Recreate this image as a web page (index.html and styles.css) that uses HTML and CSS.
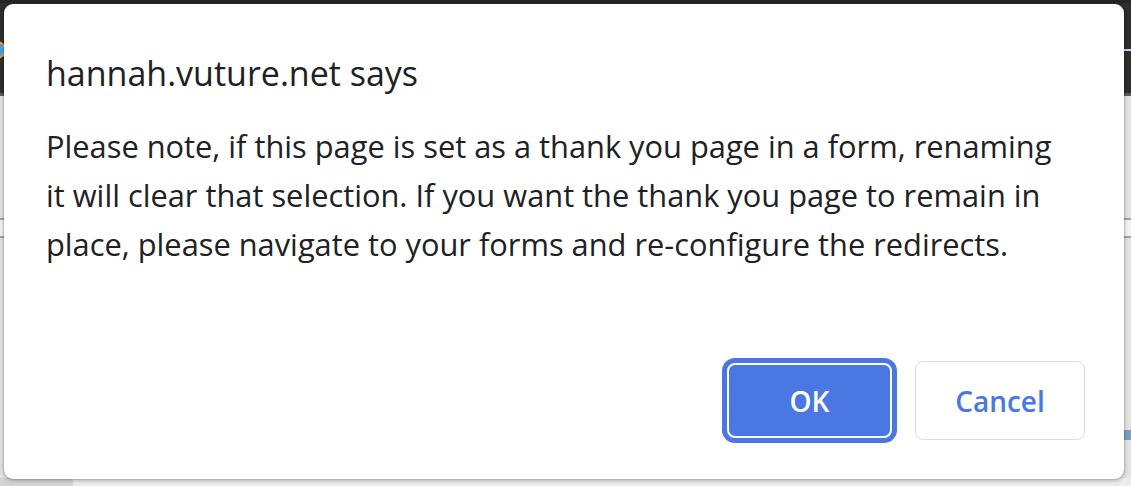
FILE: index.html
```html
<!DOCTYPE html>
<html>
<head>
<meta charset="utf-8">
<link rel="stylesheet" href="styles.css">
</head>
<body>
<div class="backdrop">
  <div class="topbar"><span class="dot"></span><span class="tick"></span></div>
  <div class="page">
    <div class="rule r1"></div>
    <div class="band"></div>
    <div class="rule r2"></div>
    <div class="blue"></div>
    <div class="fill"></div>
    <div class="bottom"><span class="bottom-left"></span></div>
  </div>
</div>
<div class="dialog">
  <div class="title">hannah.vuture.net says</div>
  <div class="message">Please note, if this page is set as a thank you page in a form, renaming it will clear that selection. If you want the thank you page to remain in place, please navigate to your forms and re-configure the redirects.</div>
  <div class="actions">
    <button class="btn btn-ok">OK</button>
    <button class="btn btn-cancel">Cancel</button>
  </div>
</div>
</body>
</html>
```
FILE: styles.css
```css
html, body {
  margin: 0;
  padding: 0;
  width: 1131px;
  height: 486px;
  overflow: hidden;
  font-family: "Open Sans", "Noto Sans", sans-serif;
}
.backdrop {
  width: 1131px;
  height: 486px;
  display: flex;
  flex-direction: column;
  background: #e3e3e3;
}
.topbar {
  height: 96px;
  background: #2e2e2e;
  border-top: 3px solid #242424;
  border-bottom: 3px solid #5a5a5a;
  box-sizing: border-box;
  position: relative;
  overflow: hidden;
}
.dot {
  position: absolute;
  left: -12px;
  top: 38px;
  width: 14px;
  height: 14px;
  border-radius: 50%;
  background: #3ea6e0;
  border: 2px solid #e8a040;
}
.tick {
  position: absolute;
  right: 0;
  top: 46px;
  width: 7px;
  height: 2px;
  background: #c8d0f0;
}
.page {
  flex: 1;
  display: flex;
  flex-direction: column;
  background: #e3e3e3;
  position: relative;
}
.rule {
  position: absolute;
  left: 0;
  right: 0;
  height: 2px;
  background: #a0a0a0;
}
.r1 { top: 122px; }
.r2 { top: 140px; }
.band {
  position: absolute;
  left: 0;
  right: 0;
  top: 124px;
  height: 16px;
  background: #f2f2f2;
}
.blue {
  position: absolute;
  right: 0;
  top: 334px;
  width: 10px;
  height: 10px;
  background: #7aa0bf;
}
.fill { flex: 1; }
.bottom {
  height: 8px;
  background: #ececec;
  display: flex;
}
.bottom-left {
  width: 73px;
  background: #d4d4d4;
}
.dialog {
  position: absolute;
  left: 4px;
  top: 4px;
  width: 1120px;
  height: 475px;
  box-sizing: border-box;
  background: #fff;
  border-radius: 9px;
  box-shadow: 0 1px 4px rgba(0,0,0,0.35), 0 0 1px rgba(0,0,0,0.35);
  padding: 47px 54px 0 42px;
  display: flex;
  flex-direction: column;
  color: #202124;
}
.title {
  font-size: 34px;
  line-height: 44px;
}
.message {
  margin-top: 27px;
  font-size: 30.8px;
  line-height: 49px;
}
.actions {
  margin-top: auto;
  margin-bottom: 39px;
  margin-right: -15px;
  display: flex;
  justify-content: flex-end;
  align-items: center;
  gap: 23px;
}
.btn {
  font-family: inherit;
  font-size: 28px;
  font-weight: 600;
  border-radius: 8px;
  cursor: pointer;
  box-sizing: border-box;
  padding: 0;
}
.btn-ok {
  width: 165px;
  height: 75px;
  background: #4a78e2;
  color: #fff;
  border: 2px solid #fff;
  box-shadow: 0 0 0 5px #4a78e2;
}
.btn-cancel {
  width: 170px;
  height: 79px;
  background: #fff;
  color: #4a78e2;
  border: 1px solid #dadce0;
}
```
